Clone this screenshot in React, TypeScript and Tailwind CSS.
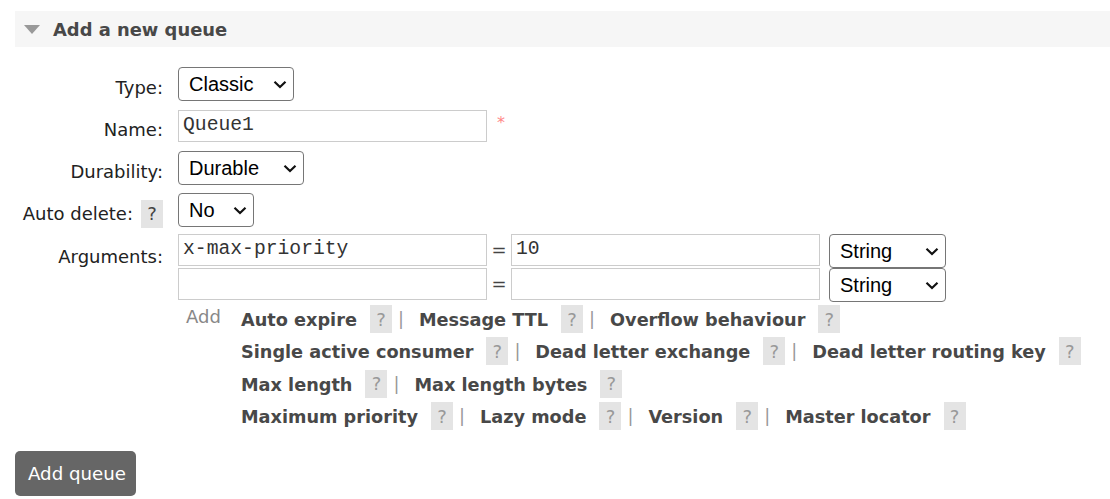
import React from "react";

const sans = "font-['DejaVu_Sans','Verdana',sans-serif]";

function Chevron() {
  return (
    <svg width="14" height="9" viewBox="0 0 14 9" fill="none">
      <path d="M1.5 1.8 L7 7 L12.5 1.8" stroke="#111" strokeWidth="2.2" />
    </svg>
  );
}

function Select({ value, width }: { value: string; width: string }) {
  return (
    <div
      className={`${width} h-[34px] flex items-center justify-between rounded-[4px] border border-[#767676] bg-white pl-[10px] pr-[6px] font-['Liberation_Sans',Arial,sans-serif] text-[20px] leading-none text-black`}
    >
      <span>{value}</span>
      <Chevron />
    </div>
  );
}

function TextInput({ value }: { value?: string }) {
  return (
    <div className="w-[309px] h-[32px] flex items-center border border-[#cccccc] bg-white pl-[4px] font-['Liberation_Mono','Courier_New',monospace] text-[19.7px] leading-none text-[#333]">
      {value}
    </div>
  );
}

function Help({ dark }: { dark?: boolean }) {
  return (
    <span
      className={`inline-flex w-[22px] h-[28px] items-center justify-center bg-[#e4e4e4] font-normal ${
        dark ? "text-[#444]" : "text-[#999]"
      }`}
    >
      ?
    </span>
  );
}

const optionRows = [
  ["Auto expire", "Message TTL", "Overflow behaviour"],
  ["Single active consumer", "Dead letter exchange", "Dead letter routing key"],
  ["Max length", "Max length bytes"],
  ["Maximum priority", "Lazy mode", "Version", "Master locator"],
];

function Row({
  label,
  pt,
  children,
}: {
  label: React.ReactNode;
  pt: string;
  children: React.ReactNode;
}) {
  return (
    <div className="flex items-start">
      <div className={`w-[163px] flex justify-end ${pt} leading-[20px] text-[#222]`}>{label}</div>
      <div className="ml-[15px]">{children}</div>
    </div>
  );
}

export default function App() {
  return (
    <div className={`${sans} text-[18px] bg-white min-h-[499px] w-[1110px] overflow-hidden`}>
      <div className="mt-[11px] ml-[15px] h-[36px] bg-[#f6f6f6] flex items-center pl-[9px]">
        <svg width="16" height="9" viewBox="0 0 16 9">
          <polygon points="0,0 16,0 8,9" fill="#999" />
        </svg>
        <h2 className="ml-[13px] mt-[2px] font-bold text-[17.9px] text-[#484848] leading-[20px]">
          Add a new queue
        </h2>
      </div>

      <div className="flex flex-col">
        <div className="mt-[20px]">
          <Row label="Type:" pt="pt-[11px]">
            <Select value="Classic" width="w-[116px]" />
          </Row>
        </div>
        <div className="mt-[9px]">
          <Row label="Name:" pt="pt-[10px]">
            <div className="flex items-start">
              <TextInput value="Queue1" />
              <span className="ml-[10px] mt-[1px] text-[16px] text-[#f88]">*</span>
            </div>
          </Row>
        </div>
        <div className="mt-[9px]">
          <Row label="Durability:" pt="pt-[11px]">
            <Select value="Durable" width="w-[126px]" />
          </Row>
        </div>
        <div className="mt-[8px]">
          <Row
            label={
              <span className="flex items-center">
                Auto delete:
                <span className="ml-[8px]">
                  <Help dark />
                </span>
              </span>
            }
            pt="pt-[7px]"
          >
            <Select value="No" width="w-[76px]" />
          </Row>
        </div>
        <div className="mt-[6px]">
          <Row label="Arguments:" pt="pt-[13px]">
            <div className="flex flex-col">
              {[
                ["x-max-priority", "10"],
                ["", ""],
              ].map(([k, v], i) => (
                <div key={i} className="flex items-start h-[34px]">
                  <TextInput value={k} />
                  <span className="w-[24px] text-center leading-[32px] text-[#444]">=</span>
                  <TextInput value={v} />
                  <div className="ml-[9px]">
                    <Select value="String" width="w-[117px]" />
                  </div>
                </div>
              ))}
              <div className="flex items-start mt-[3px]">
                <span className="pl-[8px] pt-[2px] w-[63px] leading-[20px] text-[#888]">Add</span>
                <div className="flex flex-col gap-[4.4px]">
                  {optionRows.map((row, ri) => (
                    <div
                      key={ri}
                      className="flex items-center h-[28px] font-bold text-[17.7px] text-[#484848]"
                    >
                      {row.map((item, ii) => (
                        <span key={item} className="flex items-center">
                          <span className="pt-[2px]">{item}</span>
                          <span className="ml-[13px] text-[18px]">
                            <Help />
                          </span>
                          {ii < row.length - 1 && (
                            <span className="ml-[6px] mr-[15px] font-normal text-[#999]">|</span>
                          )}
                        </span>
                      ))}
                    </div>
                  ))}
                </div>
              </div>
            </div>
          </Row>
        </div>
      </div>

      <button className="mt-[21px] ml-[15px] w-[121px] h-[45px] rounded-[5px] bg-[#666] pl-[13px] text-left text-[18.2px] text-white">
        Add queue
      </button>
    </div>
  );
}
